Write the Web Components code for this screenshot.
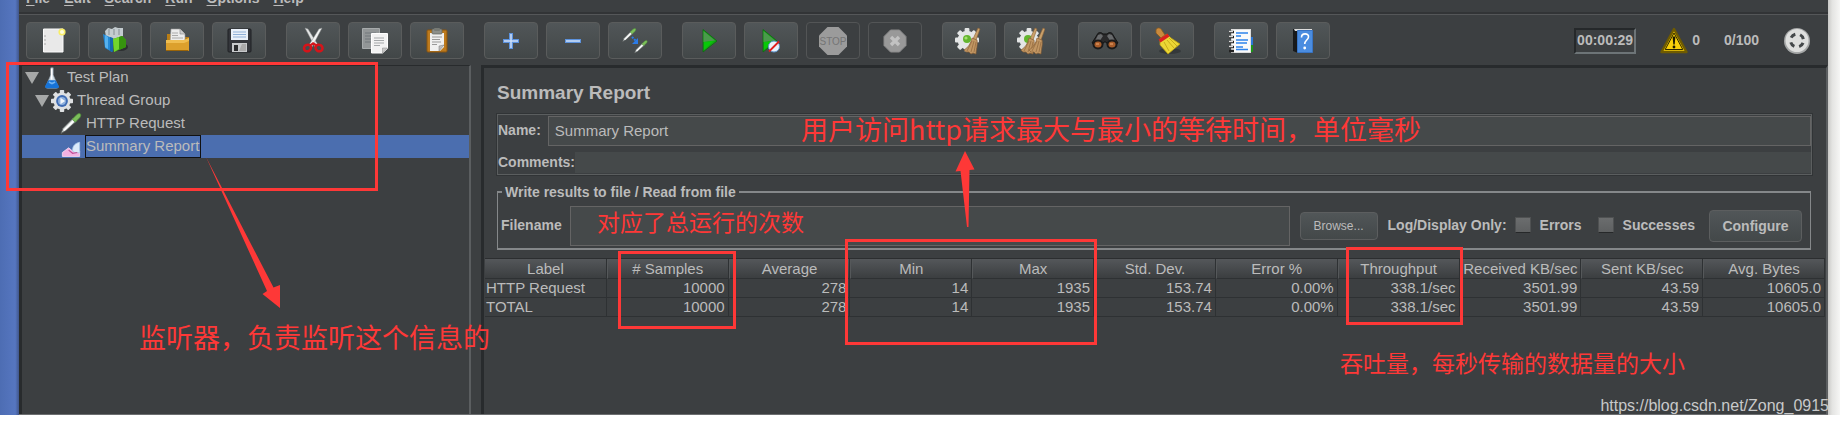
<!DOCTYPE html>
<html lang="en">
<head>
<meta charset="utf-8">
<title>Summary Report</title>
<style>
  body { margin: 0; background: #fff; color: #bbb; font: 15px/17px "Liberation Sans", Arial, sans-serif; }
</style>
</head>
<body>
<desktop-frame>
  <app-window>
    <menu-bar slot="menu"></menu-bar>
    <tool-bar slot="tools"></tool-bar>
    <test-tree slot="tree">
      <tree-row level="0" icon="flask" open>Test Plan</tree-row>
      <tree-row level="1" icon="gear" open>Thread Group</tree-row>
      <tree-row level="2" icon="dropper">HTTP Request</tree-row>
      <tree-row level="2" icon="report" selected>Summary Report</tree-row>
    </test-tree>
    <report-panel slot="main"></report-panel>
  </app-window>
  <note-layer slot="notes"></note-layer>
</desktop-frame>

<script>
const define = (name, html) => customElements.define(name, class extends HTMLElement {
  connectedCallback() {
    if (this.shadowRoot) return;
    const t = document.createElement('template');
    t.innerHTML = typeof html === 'function' ? html(this) : html;
    this.attachShadow({ mode: 'open' }).append(t.content.cloneNode(true));
  }
});

/* Icons, each on a 28 x 28 grid */
const broom = x => `<g transform="translate(${x} 0)"><path d="M23 1l2 1-4 11-3-1z" fill="#c9a06a" stroke="#8a6238" stroke-width=".6"/><path d="M17 11l5 2c1 5-1 9-1 14l-3-1-2 1-2-2-3 0-2-2c4-2 7-7 8-12z" fill="#c19663" stroke="#8b6137" stroke-width=".7"/><path d="M17 14l-5 10M19 14l-3 11M21 15l-2 10" stroke="#8f673c" stroke-width=".7"/></g>`;
const cog = (cx, cy, r, fill) => {
  let teeth = '';
  for (let i = 0; i < 8; i++) teeth += `<rect x="${cx - r * .2}" y="${cy - r}" width="${r * .4}" height="${r}" rx="1" transform="rotate(${i * 45} ${cx} ${cy})"/>`;
  return `<g fill="${fill}">${teeth}<circle cx="${cx}" cy="${cy}" r="${r * .78}"/></g>`;
};
const pipette = (x, y, s) => `<g transform="translate(${x} ${y}) scale(${s})"><path d="M1 20l2-5 10-10 3 3-10 9z" fill="#d4dad8" stroke="#5c6160" stroke-width=".8"/><path d="M4 17l9-9" stroke="#fff" stroke-width="1.6"/><path d="M12 6l4-4c1-1 3-2 4-1s0 3-1 4l-4 4z" fill="#7cbf5a" stroke="#4b8a38" stroke-width=".7"/></g>`;
const ICONS = {
  file: `<path d="M4.500 2h19.500v23h-19.500z" fill="#e9e9e9" stroke="#fafafa"/><path d="M5 9h2M5 13h2M5 17h2" stroke="#aaa"/><circle cx="23" cy="5" r="3.600" fill="#f8ee68"/><circle cx="23" cy="5" r="2" fill="#fffde0"/>`,
  books: `<ellipse cx="20" cy="20" rx="7" ry="4" fill="#2d3032"/><path d="M4 4l3-3 4 1 3-2 3 1 5 0v8l-8 3-9-2z" fill="#c4ccd0"/><path d="M8 2v6M13 2v6M18 2v6" stroke="#858e93"/><path d="M2 7l9 4v14l-7-4z" fill="#2489d6"/><path d="M4 8l3 2v12l-3-2z" fill="#56b1ee"/><path d="M9 10l3 1v14l-3-1z" fill="#1667ac"/><path d="M12 12l9-3 4 4v7l-12 5z" fill="#42a815"/><path d="M12 12l6-2v12l-5 3z" fill="#72d52b"/><path d="M18 10l3-1 4 4v7l-7 3z" fill="#36930e"/>`,
  open: `<path d="M4 7h7l2 3h13v14H4z" fill="#b97d14"/><path d="M8 2h9l5 5v9H7z" fill="#ececec" stroke="#999" stroke-width=".6"/><path d="M17 2v5h5" fill="#ccc" stroke="#888" stroke-width=".6"/><path d="M9 6h6M9 8.500h6M9 11h11" stroke="#aaa"/><path d="M3 13h18l5-2v12l-1 1H4l-1-1z" fill="#dca02c"/><path d="M3 13h18l5-2v3l-5 2H3z" fill="#efbd50"/><path d="M3 23.500h22" stroke="#9b6508"/>`,
  save: `<rect x="3" y="2" width="23" height="23" rx="1" fill="#34363b" stroke="#1f2124"/><rect x="6" y="2" width="17" height="11" fill="#eaf1fa"/><path d="M8 5h13M8 7.500h13M8 10h13" stroke="#8fb0d8"/><rect x="7" y="16" width="15" height="9" fill="#c7c9cb"/><rect x="9" y="18" width="4" height="6" fill="#2b2c2e"/><path d="M17 17h4v7h-7z" fill="#aaa"/>`,
  cut: `<path d="M6 1l3 1 10 16-3 2z" fill="#e3e5e5" stroke="#8d9090" stroke-width=".5"/><path d="M23 1l-3 1-10 16 3 2z" fill="#f3f4f4" stroke="#8d9090" stroke-width=".5"/><g fill="none" stroke="#d5141a" stroke-width="2.600"><ellipse cx="8.500" cy="21" rx="3.600" ry="3.200" transform="rotate(-30 8.500 21)"/><ellipse cx="20" cy="21" rx="3.600" ry="3.200" transform="rotate(30 20 21)"/></g><path d="M10 18l4-3 5 3-2 1-3-1-2 1z" fill="#d5141a"/>`,
  copy: `<path d="M1.500 1.500h17v20h-17z" fill="#929697" stroke="#a7abac"/><path d="M4 6h11M4 9h9M4 12h9M4 15h6" stroke="#70777a"/><path d="M10.500 6.500h16v15l-5 4.500h-11z" fill="#f2f2f2" stroke="#fff"/><path d="M13 11h10M13 13.500h10M13 16h10M13 18.500h6" stroke="#a5a8aa"/><path d="M26.500 21l-5 5v-5z" fill="#c9c9c9" stroke="#888" stroke-width=".5"/>`,
  paste: `<rect x="4" y="3" width="20" height="22" rx="1" fill="#bd7a1d" stroke="#8a540f"/><path d="M7 6h14v14l-4 4H7z" fill="#f0f0f0"/><rect x="9" y="2" width="10" height="5" rx="1" fill="#8d8f8a" stroke="#62645f" stroke-width=".7"/><rect x="11" y="1" width="6" height="3" rx="1" fill="#777a75"/><path d="M9 10h10M9 12.500h8M9 15h9M9 17.500h5" stroke="#999"/><path d="M21 18l-5 6v-5z" fill="#bdbdbd" stroke="#777" stroke-width=".5"/>`,
  plus: `<path d="M14 6v16M6 14h16" stroke="#5c92dd" stroke-width="4"/><path d="M14 7v14M7 14h14" stroke="#cfe0f8" stroke-width="1.500"/>`,
  minus: `<path d="M6 14h16" stroke="#5c92dd" stroke-width="4"/><path d="M7 14h14" stroke="#cfe0f8" stroke-width="1.500"/>`,
  toggle: `${pipette(1, 1, .68)}${pipette(13, 13, .65)}<path d="M11 10l4 4" stroke="#2a7be8" stroke-width="2" stroke-dasharray="2 1"/><path d="M17 11v6h-6z" fill="#2a7be8"/>`,
  play: `<path d="M8 2.500L22 14 8 25z" fill="#12a512" stroke="#0c6a12" stroke-width=".8"/><path d="M8.500 4L20 13.500 8.500 15z" fill="#4a9a4b"/><path d="M9 15l10-1-10 9z" fill="#08c808"/>`,
  playnow: `<path d="M6 2.500L20 14 6 25z" fill="#12a512" stroke="#0c6a12" stroke-width=".8"/><path d="M6.500 4L18 13.500 6.500 15z" fill="#4a9a4b"/><path d="M7 15l10-1-10 9z" fill="#08c808"/><circle cx="17" cy="19.500" r="5.500" fill="#e9f2fb" stroke="#5b94cd"/><path d="M12 24.500l10-10" stroke="#df1f1f" stroke-width="1.800"/>`,
  stop: `<path d="M8.500 0h11L28 8.500v11L19.500 28h-11L0 19.500v-11z" fill="#9b9b9b"/><text x="14" y="18" text-anchor="middle" font-family="Liberation Sans" font-size="10" fill="#757575">STOP</text>`,
  shutdown: `<path d="M9.500 3h9L25 9.500v9L18.500 25h-9L3 18.500v-9z" fill="#999" stroke="#8a8a8a"/><path d="M10 10l8 8M18 10l-8 8" stroke="#c2c2c2" stroke-width="3.400"/>`,
  clear: `${cog(12, 13, 12, '#e4e6e6')}<circle cx="12" cy="12" r="4" fill="#63b52e"/><circle cx="11" cy="11" r="1.600" fill="#a5e06e"/>${broom(0)}`,
  clearall: `${cog(12, 13, 12, '#e4e6e6')}<circle cx="11" cy="12" r="4" fill="#63b52e"/>${broom(-5)}${broom(3)}`,
  search: `<path d="M6 8c1-3 4-3 6-1h4c2-2 5-2 6 1l5 8-8 5-4-6h-2l-4 6-8-5z" fill="#2a2a2b" stroke="#131313"/><path d="M7 8l3-1 2 2-4 6-5 1zM21 8l-3-1-2 2 4 6 5 1z" fill="#686a6c"/><ellipse cx="7" cy="17.500" rx="5.500" ry="5" fill="#1a1a1a"/><ellipse cx="21" cy="17.500" rx="5.500" ry="5" fill="#1a1a1a"/><ellipse cx="7" cy="17.500" rx="3.500" ry="3" fill="#a85c2a"/><ellipse cx="21" cy="17.500" rx="3.500" ry="3" fill="#a85c2a"/><path d="M5 17h3M19 17h3" stroke="#f0aa72"/>`,
  sweep: `<ellipse cx="17" cy="24" rx="11" ry="3" fill="#34383a"/><path d="M3 3c1-3 4-2 5-1l4 6-4 3-5-5z" fill="#c98a3e" stroke="#8c5a1e" stroke-width=".8"/><path d="M7 12l7-5 4 4 9 6-12 10-8-9z" fill="#ecd735" stroke="#b49a10" stroke-width=".8"/><path d="M11 15l5 9M14 13l7 8M16 11l8 8" stroke="#c8ae1a"/><path d="M6.500 14l9-6" stroke="#da2020" stroke-width="3.600"/>`,
  logs: `<rect x="19" y="10" width="7" height="8" fill="#2b77d6"/><rect x="19" y="18" width="7" height="7" fill="#1b9417"/><rect x="4.500" y="2.500" width="19" height="23" fill="#fafafa" stroke="#ddd"/><path d="M2 5h5M2 10h5M2 15h5M2 20h5M2 24h5" stroke="#222" stroke-width="2.600"/><path d="M2 4.500h4M2 9.500h4M2 14.500h4M2 19.500h4" stroke="#ddd" stroke-width="1.400"/><path d="M9 6h12M9 9h5M9 13h12M9 16h11M9 20h7M9 22.500h12" stroke="#2e84ec" stroke-width="1.400"/>`,
  help: `<path d="M4 2h5v24l-5-2z" fill="#17191b"/><path d="M5 2h18v2H6z" fill="#ddd"/><path d="M8.500 3.500h15v22h-15z" fill="#4b8de0" stroke="#3874c4"/><path d="M12.500 10.500c0-5 7.500-4.500 7-.5-.3 3-3.800 3.300-3.800 7" fill="none" stroke="#fff" stroke-width="1.600"/><circle cx="15.700" cy="21" r="1.400" fill="#fff"/>`,
  warning: `<path d="M14 2L26.500 25h-25z" fill="#f8cf0a" stroke="#6f5b00" stroke-width="2.400" stroke-linejoin="round"/><path d="M14 6L22.800 22.500H5.200z" fill="none" stroke="#2b2500"/><path d="M12.600 9.500h2.800l-.7 8h-1.400z" fill="#1c1900"/><circle cx="14" cy="20" r="1.400" fill="#1c1900"/>`,
  engine: `<circle cx="14" cy="14" r="13" fill="#a5a7a7"/><circle cx="14" cy="13.500" r="11.500" fill="#dedfde"/><circle cx="14" cy="13.500" r="6.500" fill="none" stroke="#44484a" stroke-width="3" stroke-dasharray="5.200 5" stroke-dashoffset="-2.500"/>`,
  flask: `<path d="M12.500 1h3v9l6 14c1 2 0 3-2 3h-11c-2 0-3-1-2-3l6-14z" fill="#cfdbe4" stroke="#8a9aa8" stroke-width=".8"/><path d="M13.500 2v14" stroke="#fff" stroke-width="2"/><path d="M9.500 17h9l4 7c1 2 0 3-2 3h-13c-2 0-3-1-2-3z" fill="#1673d8"/><path d="M10 19l4 2 4-2" fill="none" stroke="#6fb4f5" stroke-width="2"/>`,
  gear: `${cog(14, 14, 14, '#dfe1e3')}<circle cx="14" cy="14" r="7.500" fill="#3f6cb4"/><circle cx="14" cy="14" r="5" fill="#8fb0dd"/><path d="M12 10l6 4-6 4z" fill="#f2f6fb"/>`,
  dropper: pipette(0, 0, 1.3),
  report: `<path d="M3 26v-5l8-6 6 5 8-1v7z" fill="#f3b1e2" stroke="#fbe0f5"/><path d="M16 18c0-6 4-9 9-10v13c-5 1-8 0-9-3z" fill="#dcebfa" stroke="#a9c9ec"/><path d="M11 18l5 4 6-1" fill="none" stroke="#c04d95" stroke-width="1.500"/>`
};

define('line-icon', el => `<style>:host{display:block;width:28px;height:28px;flex:none}svg{display:block;width:100%;height:100%}</style>
<svg viewBox="0 0 28 28" aria-hidden="true">${ICONS[el.getAttribute('name')]}</svg>`);

define('desktop-frame', `<style>
:host{display:grid;position:relative;grid-template-columns:19px minmax(0,1fr) 12px;box-sizing:border-box;min-height:100vh;padding-bottom:10px;overflow:hidden}
.left{background:linear-gradient(90deg,#4d6db3,#5676c0 80%,#40568c)}
.right{background:linear-gradient(90deg,#c9c9c7,#e4e4e2 35%,#f6f6f5)}
</style><div class="left"></div><slot></slot><div class="right"></div><slot name="notes"></slot>`);

define('app-window', `<style>
:host{display:flex;flex-direction:column;background:#3c3f41}
.panes{display:flex;flex:1;gap:10px;border-bottom:1px solid #6c6e70}
::slotted([slot=tree]){flex:0 0 452px}
::slotted([slot=main]){flex:1;min-width:0}
</style><slot name="menu"></slot><slot name="tools"></slot><div class="panes"><slot name="tree"></slot><slot name="main"></slot></div>`);

define('menu-bar', `<style>
:host{display:block;border-bottom:1px solid #555759;box-shadow:inset 0 -2px #323436;height:14px}
nav{display:flex;gap:14px;padding-left:7px;margin-top:-10px}
button{all:unset;font-weight:bold;font-size:14px;line-height:16px}
u{text-underline-offset:2px}
</style><nav><button><u>F</u>ile</button><button><u>E</u>dit</button><button><u>S</u>earch</button><button><u>R</u>un</button><button><u>O</u>ptions</button><button><u>H</u>elp</button></nav>`);

define('tool-button', el => `<style>
:host{display:block}
button{display:grid;place-items:center;box-sizing:border-box;width:54px;height:37px;padding:0;border:1px solid #5a5c5c;border-radius:4px;background:linear-gradient(#515658,#424748)}
button:disabled{background:none;border-color:#535556}
</style><button aria-label="${el.getAttribute('label')}" ${el.hasAttribute('disabled') ? 'disabled' : ''}><line-icon name="${el.getAttribute('icon')}"></line-icon></button>`);

const groups = [
  [['file', 'New'], ['books', 'Templates'], ['open', 'Open'], ['save', 'Save']],
  [['cut', 'Cut'], ['copy', 'Copy'], ['paste', 'Paste']],
  [['plus', 'Expand All'], ['minus', 'Collapse All'], ['toggle', 'Toggle']],
  [['play', 'Start'], ['playnow', 'Start no pauses'], ['stop', 'Stop', 1], ['shutdown', 'Shutdown', 1]],
  [['clear', 'Clear'], ['clearall', 'Clear All']],
  [['search', 'Search'], ['sweep', 'Reset Search']],
  [['logs', 'Function Helper'], ['help', 'Help']]
];
define('tool-bar', `<style>
:host{display:flex;align-items:center;gap:20px;padding:7px 17px 6px 7px}
.group{display:flex;gap:8px}
.status{display:flex;align-items:center;gap:24px;margin-left:auto;font-weight:bold;font-size:14px}
time{box-sizing:border-box;height:26px;padding:2px 1px;line-height:17px;border:2px solid;border-color:#25282a #6d7477 #6d7477 #25282a}
.warn{display:flex;align-items:center;gap:4px}
</style>${groups.map(g => `<div class="group">${g.map(([i, l, d]) => `<tool-button icon="${i}" label="${l}" ${d ? 'disabled' : ''}></tool-button>`).join('')}</div>`).join('')}
<div class="status"><time>00:00:29</time><span class="warn"><line-icon name="warning"></line-icon>0</span><span>0/100</span><line-icon name="engine"></line-icon></div>`);

define('test-tree', `<style>
:host{display:block;box-sizing:border-box;border-style:solid;border-width:1px 2px 0 3px;border-color:#282b2d #5b5e60 #282b2d #282b2d}
</style><slot></slot>`);

define('tree-row', el => `<style>
:host{display:flex;align-items:center;height:23px;box-sizing:border-box}
:host([level="0"]){padding-left:3px}
:host([level="1"]){padding-left:13px}
:host([level="2"]){padding-left:38px}
:host([selected]){background:#4b6eaf}
.arrow{border:solid transparent;border-width:12px 7px 0;border-top-color:#a6a8a8;flex:none;margin-right:2px}
line-icon{width:22px;height:22px;margin-right:3px}
.text{box-sizing:border-box;height:23px;line-height:20px;border:1px solid transparent}
:host([selected]) .text{border-color:#111;padding-right:1px}
</style>${el.hasAttribute('open') ? '<span class="arrow"></span>' : ''}<line-icon name="${el.getAttribute('icon')}"></line-icon><span class="text"><slot></slot></span>`);

define('report-panel', `<style>
:host{display:block;box-sizing:border-box;border-style:solid;border-width:3px 2px 0 3px;border-color:#282b2d #5b5e60 #282b2d #282b2d}
.form{padding:14px 14px 8px 13px}
h1{margin:0 0 10px;font-size:19px;line-height:22px}
label,legend,.caption{font-weight:bold;font-size:14px;line-height:16px}
.names{display:grid;gap:6px;padding:1px 0;border:1px solid #5b5e5f;box-shadow:0 0 0 1px #313436}
.names label{padding-bottom:2px}
.line{display:flex;align-items:center}
input[type=text]{box-sizing:border-box;flex:1;min-width:0;height:30px;padding:0 6px 2px;border:1px solid #646464;background:#45494a;color:#bbb;font:15px/17px "Liberation Sans",Arial,sans-serif}
.name{margin-left:7px}
input.comments{height:21px;border:0}
fieldset{min-width:0;margin:9px 1px 0 0;padding:6px 8px 2px 3px;border:solid #85888a;border-width:2px 1px}
legend{margin-left:1px;padding:0 3px}
fieldset .line > label,.caption{padding-bottom:2px}
input.file{height:40px;margin:0 10px 0 8px}
button{box-sizing:border-box;padding:0;border:1px solid #5c5e5f;border-radius:4px;background:linear-gradient(#515658,#434849);color:#bbb;font:bold 14px "Liberation Sans",Arial,sans-serif}
.browse{width:78px;height:28px;margin-right:10px;font-weight:normal;font-size:12px}
.configure{width:93px;height:32px;margin-left:14px}
input[type=checkbox]{appearance:none;width:16px;height:16px;margin:0 9px 0 0;border:1px solid #4f5152;border-bottom-color:#262829;background:linear-gradient(#6b6d6e,#5e6061)}
.tick{display:flex;align-items:center;margin-left:16px}
.caption + .tick{margin-left:8px}
</style>
<div class="form">
<h1>Summary Report</h1>
<div class="names">
<div class="line"><label for="name">Name:</label><input class="name" id="name" type="text" value="Summary Report"></div>
<div class="line"><label for="comments">Comments:</label><input class="comments" id="comments" type="text"></div>
</div>
<fieldset><legend>Write results to file / Read from file</legend>
<div class="line"><label for="file">Filename</label><input class="file" id="file" type="text"><button class="browse">Browse...</button><span class="caption">Log/Display Only:</span>
<label class="tick"><input type="checkbox">Errors</label><label class="tick"><input type="checkbox">Successes</label><button class="configure">Configure</button></div>
</fieldset>
</div>
<summary-table></summary-table>`);

const heads = ['Label', '# Samples', 'Average', 'Min', 'Max', 'Std. Dev.', 'Error %', 'Throughput', 'Received KB/sec', 'Sent KB/sec', 'Avg. Bytes'];
const values = ['10000', '278', '14', '1935', '153.74', '0.00%', '338.1/sec', '3501.99', '43.59', '10605.0'];
define('summary-table', `<style>
:host{display:block;margin:0 1px;border-top:1px solid #2c2e30}
table{width:100%;table-layout:fixed;border-collapse:separate;border-spacing:0}
th,td{box-sizing:border-box;white-space:nowrap;padding:0 3px 0 1px;border-right:1px solid #2e3133;border-bottom:1px solid #2e3133;font-weight:normal}
th{height:20px;padding:0;line-height:19px;background:linear-gradient(#54575a,#3b3e40);border-left:1px solid #55585a}
th:first-child{border-left:0}
td{height:19px;line-height:18px;text-align:right}
td:first-child{text-align:left}
</style><table><thead><tr>${heads.map(h => `<th>${h}</th>`).join('')}</tr></thead><tbody>${['HTTP Request', 'TOTAL'].map(r => `<tr><td>${r}</td>${values.map(v => `<td>${v}</td>`).join('')}</tr>`).join('')}</tbody></table>`);

/* Red marker boxes, arrows and remarks laid over the window */
define('note-layer', `<style>
:host{position:absolute;inset:0;pointer-events:none;color:#fe3837;font-family:"Noto Sans CJK SC",sans-serif}
.box{position:absolute;box-sizing:border-box;border:3px solid}
p{position:absolute;margin:0;white-space:nowrap;font-size:23px;line-height:30px}
p.big{font-size:27px}
svg{position:absolute;left:0;top:0;overflow:visible}
p.mark{right:11px;bottom:9px;color:#c8c9ca;font:16px/20px "Liberation Sans",Arial,sans-serif}
</style>
<div class="box" style="left:6px;top:62px;width:372px;height:129px"></div>
<div class="box" style="left:618px;top:251px;width:118px;height:78px"></div>
<div class="box" style="left:845px;top:239px;width:252px;height:106px"></div>
<div class="box" style="left:1346px;top:247px;width:117px;height:78px"></div>
<svg width="1" height="1" fill="currentColor" aria-hidden="true"><path d="M206 157L273.500 287.500 280 285V308L262.500 294 267 291Z"/><path d="M965 151L974.500 169.500 969.500 170 968.500 227H967L960.500 171 955.500 171.500Z"/></svg>
<p class="big" style="left:801px;top:114px">用户访问http请求最大与最小的等待时间，单位毫秒</p>
<p style="left:597px;top:206px">对应了总运行的次数</p>
<p class="big" style="left:139px;top:322px">监听器，负责监听这个信息的</p>
<p style="left:1340px;top:347px">吞吐量，每秒传输的数据量的大小</p>
<p class="mark">https://blog.csdn.net/Zong_0915</p>`);
</script>
</body>
</html>
